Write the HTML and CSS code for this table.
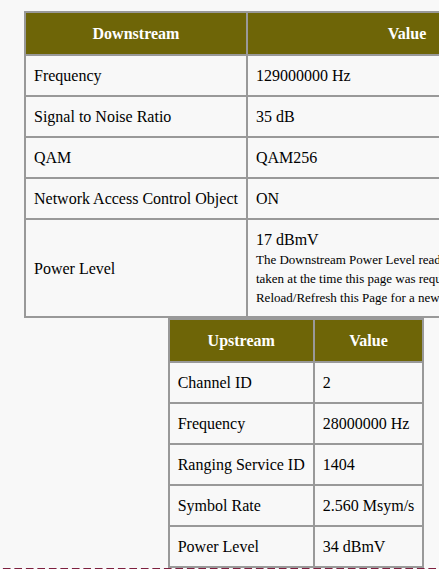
FILE: index.html
```html
<!DOCTYPE html>
<html>
<head>
<meta charset="utf-8">
<link rel="stylesheet" href="styles.css">
</head>
<body>
<div class="wrap">
  <table class="sig sig-down">
    <tr><th>Downstream</th><th>Value</th></tr>
    <tr><td class="lbl">Frequency</td><td>129000000 Hz</td></tr>
    <tr><td class="lbl">Signal to Noise Ratio</td><td>35 dB</td></tr>
    <tr><td class="lbl">QAM</td><td>QAM256</td></tr>
    <tr><td class="lbl">Network Access Control Object</td><td>ON</td></tr>
    <tr><td class="lbl">Power Level</td><td>17 dBmV<br><span class="note">The Downstream Power Level reading is a snapshot taken at the time this page was requested. Please Reload/Refresh this Page for a new reading</span></td></tr>
  </table>
  <table class="sig sig-up">
    <tr><th>Upstream</th><th>Value</th></tr>
    <tr><td class="lbl">Channel ID</td><td>2</td></tr>
    <tr><td class="lbl">Frequency</td><td>28000000 Hz</td></tr>
    <tr><td class="lbl">Ranging Service ID</td><td>1404</td></tr>
    <tr><td class="lbl">Symbol Rate</td><td>2.560 Msym/s</td></tr>
    <tr><td class="lbl">Power Level</td><td>34 dBmV</td></tr>
  </table>
</div>
<div class="foot"></div>
</body>
</html>
```
FILE: styles.css
```css
html {
  overflow: hidden;
  background: #f8f8f8;
}
body {
  margin: 0;
  background: #f8f8f8;
  font-family: "Liberation Serif", "Times New Roman", serif;
  font-size: 16px;
  color: #000;
}
.wrap {
  width: 544px;
  padding: 11px 0 0 24px;
}
.sig {
  border-collapse: separate;
  border-spacing: 0;
  border: 1px solid #999;
}
.sig-down {
  width: 544px;
}
.sig-up {
  margin: 0 auto;
}
.sig th,
.sig td {
  border: 1px solid #999;
  line-height: 19px;
  text-align: left;
  vertical-align: middle;
}
.sig th {
  background: #6e6507;
  color: #fff;
  font-weight: bold;
  text-align: center;
  padding: 11px 8px 11px;
}
.sig td {
  padding: 10px 8px;
}
.sig td.lbl {
  white-space: nowrap;
}
.note {
  font-size: 13px;
  line-height: 1;
}
.foot {
  height: 2px;
  background: repeating-linear-gradient(to right, transparent 0 3px, #7d1f3e 3px 11px, transparent 11px 11.5px);
  background-size: 11.5px 2px;
}
```
